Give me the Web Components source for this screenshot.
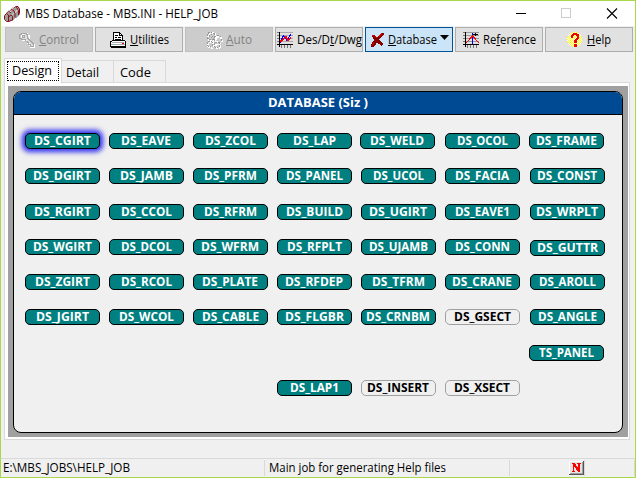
<!DOCTYPE html>
<html lang="en"><head><meta charset="utf-8"><title>MBS Database</title>
<style>
body{margin:0;font:12px/16px "Open Sans","Noto Sans",sans-serif;color:#000;overflow:hidden}
</style></head><body>
<app-window></app-window>
<script>
const define=(name,html,setup)=>customElements.define(name,class extends HTMLElement{
  connectedCallback(){
    if(this.shadowRoot)return;
    const t=document.createElement('template');
    t.innerHTML=html;
    this.attachShadow({mode:'open'}).append(t.content.cloneNode(true));
    if(setup)setup.call(this,this.shadowRoot);
  }
});

/* A label whose glyphs are condensed or widened to the width given in "w". */
define('fit-text',`<style>:host{display:block;white-space:nowrap;flex:none}span{display:inline-block;transform-origin:0 50%}</style><span><slot></slot></span>`,
function(r){
  const w=+this.getAttribute('w');
  const s=r.querySelector('span');
  this.style.width=w+'px';
  s.style.transform='scaleX('+w/s.getBoundingClientRect().width+')';
});

const icons={
app:`<path d="M1 8L9 2L12 0L15 1.500L16 5V9L8 15L4 16L0 13Z" fill="#9c9c9c"/><path d="M2 7L10 1M4 7L12 1M8 9L15 3" stroke="#cfcfcf" fill="none"/><g shape-rendering="auto" stroke="#8c0f18" stroke-width="1" fill="none"><path d="M.5 13.500V9.500L2.500 7.500L4.500 9V15.500M.5 13.500L2.500 15.500H4.500M4.500 11L7 9L8.500 10.500V14M3.500 6.500L5 5.500L7 7M6.500 4.500L8 3.500L10 5L11 7.500V11.500M9.500 2.500L11.500 1L13.500 2.500L14.500 5V9M12 .5H14L15.500 3V7.500M4.500 15.500L8.500 14"/></g>`,
key:`<path d="M2 2.500H4V1.500H8V3H10V7L15 12V15H11V13H10V11H8V9L7 8H3V7H2Z" fill="#dedede" stroke="#fff"/><path d="M.5 2.500H2V1H7V2H8.500V6L14.500 12V14.500H11V12.500H9.500V10.500H8V9H7L6 7.500H2V6H.5ZM3 3H5V5H3ZM8 6L13 11" fill="none" stroke="#a5a5a5"/>`,
printer:`<path d="M3.500 8V.5H9.500L12.500 3.500V8" fill="#fff" stroke="#000"/><path d="M9.500.5V3.500H12.500M5 3.500H8M5 5.500H7M8 5.500H11M5 7.500H11" fill="none" stroke="#000"/><path d="M1.500 9.500L3 8.500H14L15.500 9.500V14.500H.5V10Z" fill="#fff" stroke="#000"/><path d="M2 10.500H14M1 12.500H15" stroke="#aaa"/><path d="M12 11.500H14" stroke="#e00"/><path d="M1 15.500H16" stroke="#000"/>`,
gears:`<g fill="none" stroke="#fff" stroke-width="2" stroke-dasharray="2 1"><circle cx="6" cy="5" r="4"/><circle cx="13" cy="8" r="3"/><circle cx="5" cy="13" r="3"/><circle cx="12" cy="14" r="2"/></g><g fill="none" stroke="#969696" stroke-dasharray="2 1"><circle cx="5" cy="4" r="4"/><circle cx="5" cy="4" r="1.500"/><circle cx="12" cy="7" r="3.500"/><circle cx="4" cy="12" r="3"/><circle cx="11" cy="13" r="3"/></g>`,
chart:`<path d="M2 .5H16M2 3.500H16M2 6.500H16M2 9.500H16" stroke="#aaa"/><path d="M2.500 0V15M0 12.500H16" stroke="#000"/><path d="M0 .5H2M0 3.500H2M0 6.500H2M0 9.500H2M4.500 13V16M7.500 13V16M10.500 13V16M13.500 13V16" stroke="#777"/><path d="M3 10.500L6.500 3.500L10 8.500L14 2" fill="none" stroke="#00f"/><path d="M3 9.500L6 8L9 5L11 8.500L14 5" fill="none" stroke="#f00" stroke-width="1.400"/>`,
ref:`<path d="M2 .5H16M2 3.500H16M2 6.500H16M2 9.500H16" stroke="#999"/><path d="M2.500 0V15M0 12.500H16" stroke="#000"/><path d="M0 .5H2M0 3.500H2M0 6.500H2M0 9.500H2M4.500 13V16M7.500 13V16M10.500 13V16M13.500 13V16" stroke="#777"/><path d="M9.500 1V12" stroke="#00f"/><path d="M3 11L6 8L9 4H10L13 8L16 11" fill="none" stroke="#f00" stroke-width="1.200"/><path d="M10 2.500H14M12.500 1V4M14.500 2V3" stroke="#000"/>`,
cross:`<path d="M1.500 3.500L4 2.500L7 5.500L11 1H13.500V3L9.500 7.500L13 12L11.500 14L7 10.500L4 14.500L1 14.500L.8 12.500L4.500 8Z" fill="#860000"/><path d="M2 4L4 3L7 6M9 4.500L12 1.500M2 13L4 10.500" stroke="#d80000" fill="none"/>`,
help:`<defs><pattern id="d" width="2" height="2" patternUnits="userSpaceOnUse"><rect width="2" height="2" fill="#ff0"/><rect width="1" height="1" fill="#fff"/><rect x="1" y="1" width="1" height="1" fill="#fff"/></pattern></defs><circle cx="7.500" cy="7.500" r="7.500" fill="url(#d)"/><path d="M5.300 5.500V3.500L7 2.200H9.500L11 3.500V6L8.500 8.500V11" fill="none" stroke="#f00000" stroke-width="2.200"/><path d="M7 12H10V15H7Z" fill="#f00000"/>`,
n:`<rect width="15" height="14" fill="#fff"/><path d="M0 13.500H15M14.500 0V14" stroke="#555"/><path d="M1 12.500H14M13.500 1V13" stroke="#a0a0a0"/><rect x="1" y="1" width="12" height="11" fill="#e4e4e4"/><path d="M3 2H6L9 7V3H8V2H12V3H11V11H9L5 5V10H6V11H3V10H4V3H3Z" fill="#f00"/>`
};
define('px-icon',`<style>:host{display:block;flex:none}svg{display:block;overflow:visible}</style><svg shape-rendering="crispEdges"></svg>`,
function(r){
  const s=r.querySelector('svg');
  s.setAttribute('width',16);s.setAttribute('height',16);
  s.innerHTML=icons[this.getAttribute('name')];
});

define('tool-button',`<style>
:host{display:flex;box-sizing:border-box;width:88px;height:25px;border:1px solid #adadad;background:#e1e1e1;align-items:center}
:host([disabled]){background:#ccc;border-color:#bfbfbf;color:#838383}
:host([active]){background:#cce4f7;border-color:#00549a}
</style><slot></slot>`);

define('tool-bar',`<style>
:host{display:flex;gap:2px;padding:1px 0 0 4px;height:31px;box-sizing:border-box}
px-icon{margin-right:4px}
svg{margin:-4px 0 0 3px;display:block;flex:none}
</style>
<tool-button disabled><px-icon name="key" style="margin-left:13px"></px-icon><fit-text w="40"><u>C</u>ontrol</fit-text></tool-button>
<tool-button><px-icon name="printer" style="margin-left:14px"></px-icon><fit-text w="39"><u>U</u>tilities</fit-text></tool-button>
<tool-button disabled><px-icon name="gears" style="margin-left:20px"></px-icon><fit-text w="26"><u>A</u>uto</fit-text></tool-button>
<tool-button><px-icon name="chart" style="margin-left:1px"></px-icon><fit-text w="65">Des/D<u>t</u>/Dwg</fit-text></tool-button>
<tool-button active><px-icon name="cross" style="margin-left:4px;margin-right:2px"></px-icon><fit-text w="49"><u>D</u>atabase</fit-text><svg width="9" height="5"><path d="M0 0H9L4.500 5Z"/></svg></tool-button>
<tool-button><px-icon name="ref" style="margin-left:7px"></px-icon><fit-text w="53">Re<u>f</u>erence</fit-text></tool-button>
<tool-button><px-icon name="help" style="margin-left:21px;"></px-icon><fit-text w="24"><u>H</u>elp</fit-text></tool-button>`);

define('title-bar',`<style>
:host{display:flex;align-items:center;height:25px;background:#fff;padding-left:3px}
fit-text{margin-left:5px}
svg{margin-left:auto;margin-right:17px}
</style><px-icon name="app"></px-icon><fit-text w="193">MBS Database - MBS.INI - HELP_JOB</fit-text>
<svg width="102" height="11" fill="none" shape-rendering="crispEdges"><path d="M0 5.500H10" stroke="#000"/><rect x="45.500" y=".5" width="9" height="9" stroke="#ccc"/><path shape-rendering="auto" d="M91 .5L101 10.500M101 .5L91 10.500" stroke="#000" stroke-width="1.100"/></svg>`);

define('tab-item',`<style>
:host{display:block;box-sizing:border-box;width:52px;height:22px;border:1px solid #d9d9d9;border-left:0;border-bottom:0;padding:2px 0 0 4px;font-size:13px;line-height:18px}
:host([selected]){width:58px;height:25px;margin-bottom:-1px;background:#fff;border-left:1px solid #d9d9d9;padding:2px 0 0 2px}
div{box-sizing:border-box}
:host([selected]) div{height:20px;width:52px;border:1px dotted #000;padding-left:4px;line-height:16px}
</style><div><slot></slot></div>`);

define('data-pill',`<style>
:host{display:flex;box-sizing:border-box;width:75px;height:16px;border:1px solid #000;border-radius:5px;background:#008080;color:#fff;font-weight:700;line-height:14px;justify-content:center;padding-right:1px}
:host([plain]){background:#f0f0f0;border-color:#a0a0a0;color:#000}
:host([selected]){box-shadow:0 0 4px 2px #3030f0,0 0 4px 5px #7070ec80}
</style><slot></slot>`);

define('data-board',`<style>
:host{display:block;box-sizing:border-box;height:342px;border:1px solid #000;border-radius:8px;background:#f0f0f0;overflow:hidden}
header{height:22px;background:#004a94;border-bottom:1px solid #000;color:#fff;font-weight:700;display:flex;justify-content:center;line-height:22px;padding-right:1px}
section{display:grid;grid-template-columns:84px 84px 84px 84px 84px 84px 75px;grid-template-rows:35px 36px 35px 35px 35px 36px 35px 16px;padding:18px 0 0 11px}
</style><header><fit-text w="100">DATABASE (Siz )</fit-text></header><section></section>`,
function(r){
  const rows=[
    'CGIRT57 EAVE50 ZCOL51 LAP43 WELD54 OCOL51 FRAME61',
    'DGIRT58 JAMB53 PFRM53 PANEL57 UCOL51 FACIA54 CONST60',
    'RGIRT57 CCOL51 RFRM53 BUILD57 UGIRT58 EAVE1:55 WRPLT62',
    'WGIRT59 DCOL51 WFRM58 RFPLT55 UJAMB59 CONN55 GUTTR61',
    'ZGIRT55 RCOL51 PLATE56 RFDEP58 TFRM53 CRANE60 AROLL57',
    'JGIRT53 WCOL55 CABLE57 FLGBR59 CRNBM64 GSECT57 ANGLE59',
    '- - - - - - TS_PANEL55',
    '- - - LAP1:49 INSERT62 XSECT56 -'];
  const plain=['GSECT','INSERT','XSECT'];
  const grid=r.querySelector('section');
  rows.forEach((row,y)=>row.split(' ').forEach((cell,x)=>{
    if(cell==='-')return;
    const [,name,w]=cell.match(/^(.*?):?(\d\d)$/);
    const pill=document.createElement('data-pill');
    pill.style.gridArea=`${y+1}/${x+1}`;
    if(plain.includes(name))pill.setAttribute('plain','');
    if(name==='CGIRT')pill.setAttribute('selected','');
    if(name==='WELD')pill.style.marginLeft='-1px';
    if(x===6&&y!==0&&y!==6)pill.style.marginLeft='1px';
    if(name==='GUTTR')pill.style.marginTop='1px';
    pill.innerHTML=`<fit-text w="${w}">${name.startsWith('TS')?name:'DS_'+name}</fit-text>`;
    grid.append(pill);
  }));
});

define('tab-panel',`<style>
:host{display:block;padding:0 5px 0 3px}
nav{display:flex;align-items:flex-end;height:25px;position:relative}
.page{box-sizing:border-box;height:358px;border:1px solid #d9d9d9;background:#fff;padding:3px 1px 2px 3px}
.frame{box-sizing:border-box;height:351px;background:#a0a0a0;padding:5px 5px 4px}
</style><nav><tab-item selected><fit-text w="40">Design</fit-text></tab-item><tab-item><fit-text w="33">Detail</fit-text></tab-item><tab-item><fit-text w="31" style="margin-left:2px">Code</fit-text></tab-item></nav>
<div class="page"><div class="frame"><data-board></data-board></div></div>`);

define('status-bar',`<style>
:host{display:flex;box-sizing:border-box;height:19px;margin-top:auto;border-top:1px solid #d9d9d9;padding-top:1px}
div{box-sizing:border-box;height:16px;border-right:1px solid #d9d9d9;padding-left:2px}
</style><div style="width:264px"><fit-text w="127">E:\\MBS_JOBS\\HELP_JOB</fit-text></div><div style="width:245px;padding-left:4px"><fit-text w="177">Main job for generating Help files</fit-text></div><div style="width:75px;padding:1px 0 0 59px"><px-icon name="n"></px-icon></div><div style="width:50px"></div>`);

define('app-window',`<style>
:host{display:flex;flex-direction:column;box-sizing:border-box;width:636px;height:478px;border:1px solid #a9d94a;background:#f0f0f0}
</style><title-bar></title-bar><tool-bar></tool-bar><tab-panel></tab-panel><status-bar></status-bar>`);
</script></body></html>
